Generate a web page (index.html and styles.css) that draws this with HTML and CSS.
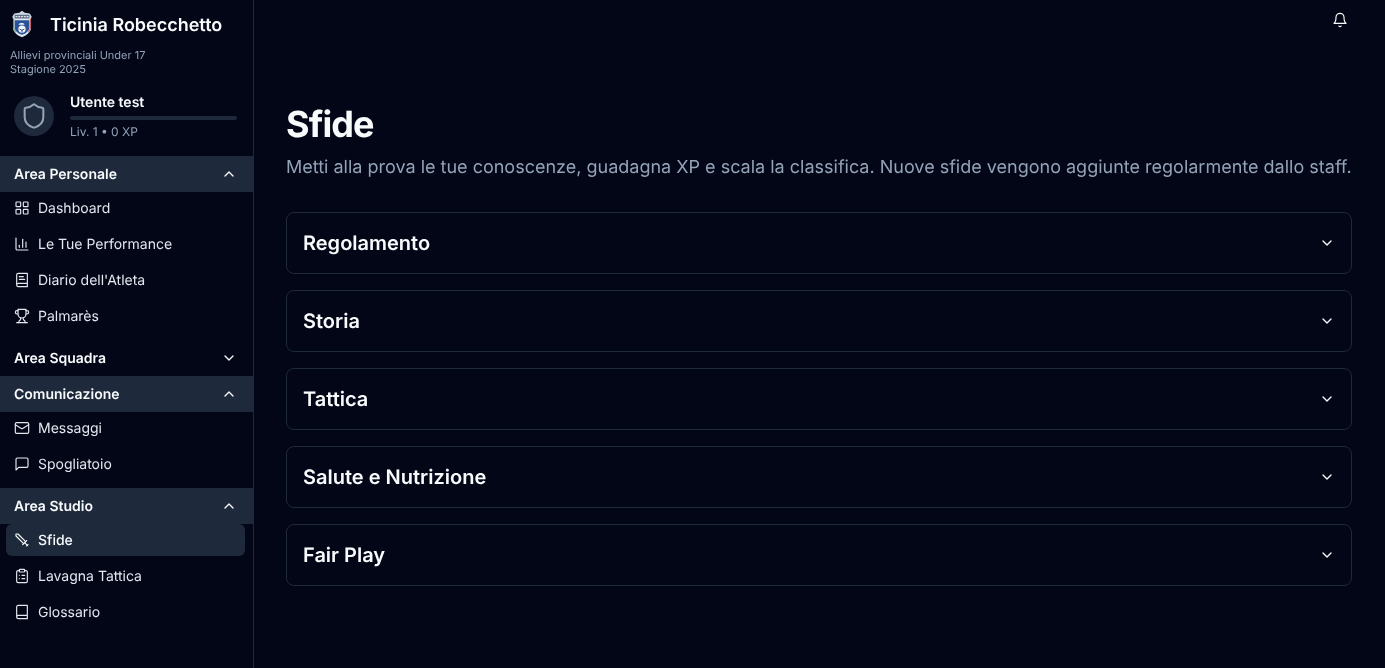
FILE: index.html
```html
<!DOCTYPE html>
<html lang="it">
<head>
<meta charset="utf-8">
<title>Sfide</title>
<link rel="stylesheet" href="styles.css">
</head>
<body>
<div class="app">
  <aside class="sidebar">
    <div class="brand">
      <svg class="logo" viewBox="0 0 24 30">
        <path d="M12 .5l3 2.200 5.500.8 2 3.200-.8 3.500V19c0 5-5 8.500-9.700 10.500C7 27.500 2.300 24 2.300 19v-8.800L1.500 6.700l2-3.200L9 2.700z" fill="#cbd5e1"/>
        <path d="M2.300 8h19.400v11c0 4.500-4.800 7.700-9.700 9.500-4.900-1.800-9.700-5-9.700-9.500z" fill="#e2e8f0"/>
        <path d="M4 11h16v8c0 3.500-4 6.300-8 7.800-4-1.500-8-4.300-8-7.800z" fill="#2a5298"/>
        <path d="M2.800 9v10c0 2 1 3.500 2.300 5" fill="none" stroke="#5aa06a" stroke-width="1.200"/>
        <path d="M21.200 9v10c0 2-1 3.500-2.300 5" fill="none" stroke="#c05a5e" stroke-width="1.200"/>
        <rect x="4" y="5" width="16" height="4" fill="#5d6b85"/>
        <path d="M5 7h14" stroke="#e2e8f0" stroke-width="1.300" stroke-dasharray="2 1"/>
        <circle cx="12" cy="20.500" r="4" fill="#f1f5f9"/>
        <path d="M9.500 20.500l2.500 1.500 2.500-1.500M12 22v2" stroke="#1e3a70" fill="none"/>
        <path d="M8 15.500c2-2 5-2 7 0-2 .6-5 .6-7 0z" fill="#f1f5f9"/>
      </svg>
      <span class="brand-name">Ticinia Robecchetto</span>
    </div>
    <p class="brand-sub">Allievi provinciali Under 17<br>Stagione 2025</p>
    <div class="user">
      <div class="avatar">
        <svg class="icon shield" viewBox="0 0 24 24"><path d="M20 13c0 5-3.500 7.500-7.660 8.950a1 1 0 0 1-.67-.01C7.500 20.500 4 18 4 13V6a1 1 0 0 1 1-1c2 0 4.500-1.200 6.240-2.720a1.170 1.170 0 0 1 1.520 0C14.510 3.810 17 5 19 5a1 1 0 0 1 1 1z"/></svg>
      </div>
      <div class="user-info">
        <div class="user-name">Utente test</div>
        <div class="bar"></div>
        <div class="user-level">Liv. 1 • 0 XP</div>
      </div>
    </div>

    <nav>
      <div class="group-head open"><span>Area Personale</span><svg class="icon" viewBox="0 0 24 24"><path d="m18 15-6-6-6 6"/></svg></div>
      <ul class="group-items">
        <li class="item"><svg class="icon" viewBox="0 0 24 24"><rect x="3" y="3" width="7" height="7" rx="1"/><rect x="14" y="3" width="7" height="7" rx="1"/><rect x="14" y="14" width="7" height="7" rx="1"/><rect x="3" y="14" width="7" height="7" rx="1"/></svg>Dashboard</li>
        <li class="item"><svg class="icon" viewBox="0 0 24 24"><path d="M3 3v16a2 2 0 0 0 2 2h16"/><path d="M18 17V9"/><path d="M13 17V5"/><path d="M8 17v-3"/></svg>Le Tue Performance</li>
        <li class="item"><svg class="icon" viewBox="0 0 24 24"><path d="M4 19.500v-15A2.500 2.500 0 0 1 6.500 2H20v20H6.500a2.500 2.500 0 0 1 0-5H20"/><path d="M8 7h6"/><path d="M8 11h8"/></svg>Diario dell'Atleta</li>
        <li class="item"><svg class="icon" viewBox="0 0 24 24"><path d="M6 9H4.500a2.500 2.500 0 0 1 0-5H6"/><path d="M18 9h1.500a2.500 2.500 0 0 0 0-5H18"/><path d="M4 22h16"/><path d="M10 14.660V17c0 .55-.47.98-.97 1.210C7.850 18.750 7 20.240 7 22"/><path d="M14 14.660V17c0 .55.470.98.970 1.210C16.150 18.750 17 20.240 17 22"/><path d="M18 2H6v7a6 6 0 0 0 12 0V2Z"/></svg>Palmarès</li>
      </ul>
      <div class="group-head"><span>Area Squadra</span><svg class="icon" viewBox="0 0 24 24"><path d="m6 9 6 6 6-6"/></svg></div>
      <div class="group-head open"><span>Comunicazione</span><svg class="icon" viewBox="0 0 24 24"><path d="m18 15-6-6-6 6"/></svg></div>
      <ul class="group-items">
        <li class="item"><svg class="icon" viewBox="0 0 24 24"><rect x="2" y="4" width="20" height="16" rx="2"/><path d="m22 7-8.970 5.700a1.940 1.940 0 0 1-2.060 0L2 7"/></svg>Messaggi</li>
        <li class="item"><svg class="icon" viewBox="0 0 24 24"><path d="M21 15a2 2 0 0 1-2 2H7l-4 4V5a2 2 0 0 1 2-2h14a2 2 0 0 1 2 2z"/></svg>Spogliatoio</li>
      </ul>
      <div class="group-head open"><span>Area Studio</span><svg class="icon" viewBox="0 0 24 24"><path d="m18 15-6-6-6 6"/></svg></div>
      <ul class="group-items">
        <li class="item active"><svg class="icon" viewBox="0 0 24 24"><path d="M14.500 17.500 3 6V3h3l11.500 11.500"/><path d="m13 19 6-6"/><path d="m16 16 4 4"/><path d="m19 21 2-2"/></svg>Sfide</li>
        <li class="item"><svg class="icon" viewBox="0 0 24 24"><rect x="8" y="2" width="8" height="4" rx="1"/><path d="M16 4h2a2 2 0 0 1 2 2v14a2 2 0 0 1-2 2H6a2 2 0 0 1-2-2V6a2 2 0 0 1 2-2h2"/><path d="M12 11h4"/><path d="M12 16h4"/><path d="M8 11h.01"/><path d="M8 16h.01"/></svg>Lavagna Tattica</li>
        <li class="item"><svg class="icon" viewBox="0 0 24 24"><path d="M4 19.500v-15A2.500 2.500 0 0 1 6.500 2H20v20H6.500a2.500 2.500 0 0 1 0-5H20"/></svg>Glossario</li>
      </ul>
    </nav>
  </aside>

  <div class="main">
    <header class="topbar">
      <svg class="icon" viewBox="0 0 24 24"><path d="M6 8a6 6 0 0 1 12 0c0 7 3 9 3 9H3s3-2 3-9"/><path d="M10.300 21a1.940 1.940 0 0 0 3.400 0"/></svg>
    </header>
    <main class="content">
      <h1>Sfide</h1>
      <p class="lead">Metti alla prova le tue conoscenze, guadagna XP e scala la classifica. Nuove sfide vengono aggiunte regolarmente dallo staff.</p>
      <div class="cards">
        <div class="card"><h2>Regolamento</h2><svg class="icon" viewBox="0 0 24 24"><path d="m6 9 6 6 6-6"/></svg></div>
        <div class="card"><h2>Storia</h2><svg class="icon" viewBox="0 0 24 24"><path d="m6 9 6 6 6-6"/></svg></div>
        <div class="card"><h2>Tattica</h2><svg class="icon" viewBox="0 0 24 24"><path d="m6 9 6 6 6-6"/></svg></div>
        <div class="card"><h2>Salute e Nutrizione</h2><svg class="icon" viewBox="0 0 24 24"><path d="m6 9 6 6 6-6"/></svg></div>
        <div class="card"><h2>Fair Play</h2><svg class="icon" viewBox="0 0 24 24"><path d="m6 9 6 6 6-6"/></svg></div>
      </div>
    </main>
  </div>
</div>
</body>
</html>
```

FILE: styles.css
```css
* { box-sizing: border-box; }
html, body { height: 100%; }
body {
  margin: 0;
  background: #020617;
  color: #f8fafc;
  font-family: Inter, "Liberation Sans", sans-serif;
  text-rendering: geometricPrecision;
  -webkit-font-smoothing: antialiased;
  overflow: hidden;
}
.app { display: flex; height: 668px; will-change: opacity; }
.icon {
  width: 16px;
  height: 16px;
  flex: none;
  fill: none;
  stroke: currentColor;
  stroke-width: 2;
  stroke-linecap: round;
  stroke-linejoin: round;
}
.item .icon, .topbar .icon { stroke-width: 1.75; }

/* Sidebar */
.sidebar {
  width: 254px;
  flex: none;
  border-right: 1px solid #1e293b;
}
.brand {
  display: flex;
  align-items: center;
  gap: 17px;
  height: 30px;
  margin-top: 9px;
  padding-left: 11px;
}
.logo { width: 22px; height: 30px; flex: none; }
.brand-name { font-size: 18px; font-weight: 600; line-height: 28px; padding-top: 4px; }
.brand-sub {
  margin: 9px 0 0;
  padding-left: 10px;
  font-size: 11px;
  line-height: 14px;
  color: #94a3b8;
}
.user {
  display: flex;
  align-items: center;
  gap: 16px;
  margin-top: 16px;
  padding: 0 16px 0 14px;
}
.avatar {
  width: 40px;
  height: 40px;
  flex: none;
  border-radius: 50%;
  background: #1e293b;
  color: #94a3b8;
  display: flex;
  align-items: center;
  justify-content: center;
}
.shield { width: 28px; height: 28px; stroke-width: 1.75; }
.user-info { flex: 1; min-width: 0; }
.user-name { font-size: 14px; font-weight: 600; line-height: 20px; margin-top: 1px; }
.bar {
  height: 4px;
  margin-top: 3px;
  border-radius: 2px;
  background: #1e293b;
}
.user-level {
  margin-top: 4px;
  font-size: 12px;
  line-height: 16px;
  color: #94a3b8;
}
nav { margin-top: 16px; }
.group-head {
  display: flex;
  align-items: center;
  justify-content: space-between;
  height: 36px;
  padding: 0 16px 0 14px;
  font-size: 14px;
  font-weight: 600;
}
.group-head.open { background: #1e293b; }
.group-items {
  list-style: none;
  margin: 0;
  padding: 0 8px 8px 6px;
  display: flex;
  flex-direction: column;
  gap: 4px;
}
.item {
  display: flex;
  align-items: center;
  gap: 8px;
  height: 32px;
  padding: 0 8px;
  border-radius: 6px;
  font-size: 14px;
  font-weight: 400;
  color: #e2e8f0;
}
.item.active { background: #1e293b; color: #f8fafc; font-weight: 500; }

/* Main */
.main { flex: 1; min-width: 0; }
.topbar {
  display: flex;
  justify-content: flex-end;
  height: 64px;
  padding: 12px 37px 0 0;
}
.content { padding: 40px 33px 0 32px; }
h1 {
  margin: 0;
  font-size: 36px;
  line-height: 40px;
  font-weight: 700;
  letter-spacing: -0.9px;
}
.lead {
  margin: 10px 0 0;
  font-size: 18px;
  line-height: 28px;
  color: #94a3b8;
  white-space: nowrap;
}
.cards {
  display: flex;
  flex-direction: column;
  gap: 16px;
  margin-top: 30px;
}
.card {
  display: flex;
  align-items: center;
  justify-content: space-between;
  height: 62px;
  padding: 0 16px;
  border: 1px solid #1e293b;
  border-radius: 8px;
}
h2 {
  margin: 0;
  font-size: 20px;
  line-height: 28px;
  font-weight: 600;
}
```
